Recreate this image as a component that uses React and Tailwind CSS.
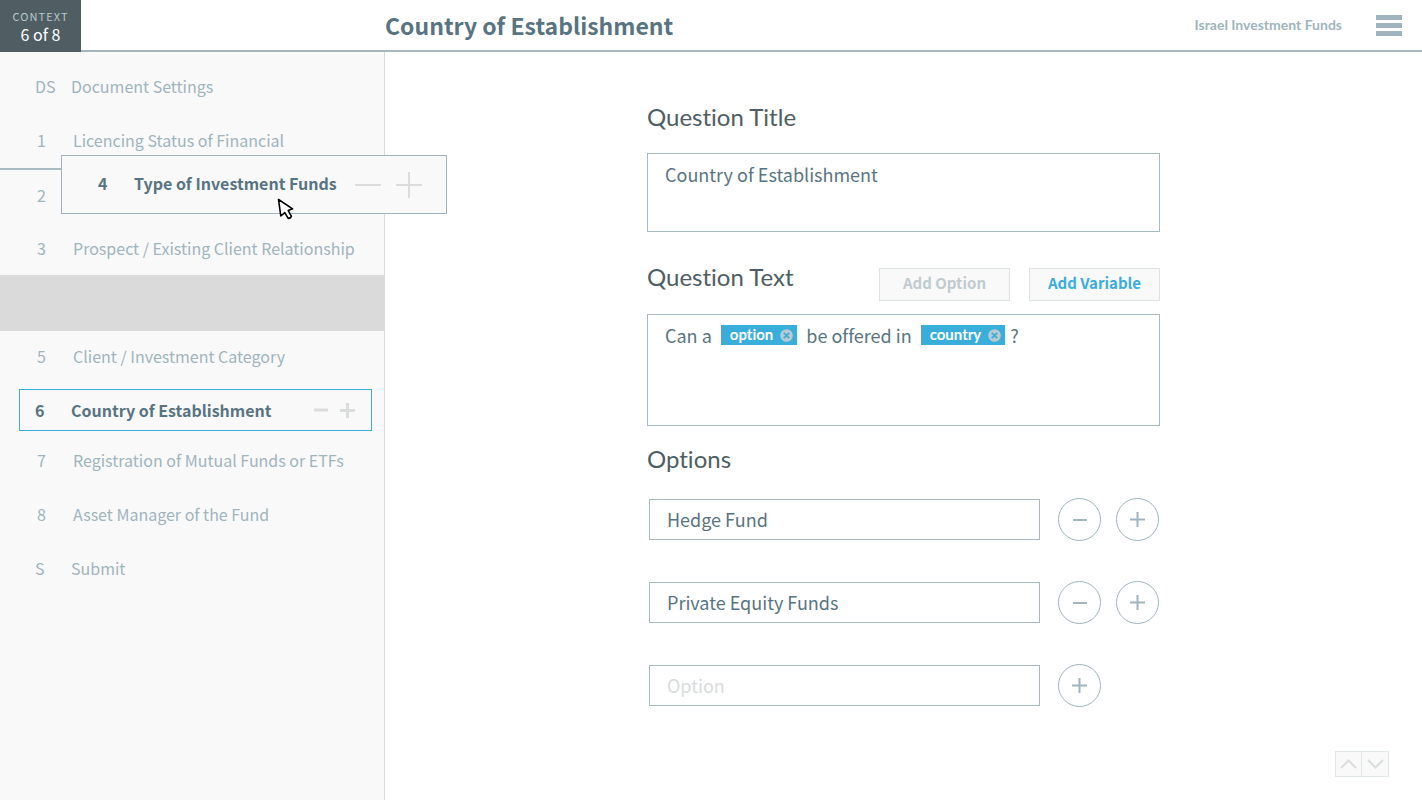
import { useState } from 'react'
import clsx from 'clsx'

const steps = [
  { id: 'DS', label: 'Document Settings', wide: true },
  { id: '1', label: 'Licencing Status of Financial' },
  { id: '2', label: '', dropTarget: true },
  { id: '3', label: 'Prospect / Existing Client Relationship' },
  { id: '4', placeholder: true },
  { id: '5', label: 'Client / Investment Category' },
  { id: '6', label: 'Country of Establishment', active: true },
  { id: '7', label: 'Registration of Mutual Funds or ETFs' },
  { id: '8', label: 'Asset Manager of the Fund' },
  { id: 'S', label: 'Submit', wide: true },
]

const Minus = ({ size, stroke = 2 }) => (
  <svg width={size} height={size} viewBox={`0 0 ${size} ${size}`} fill="none" stroke="currentColor" strokeWidth={stroke}>
    <path d={`M0 ${size / 2}H${size}`} />
  </svg>
)

const Plus = ({ size, stroke = 2 }) => (
  <svg width={size} height={size} viewBox={`0 0 ${size} ${size}`} fill="none" stroke="currentColor" strokeWidth={stroke}>
    <path d={`M0 ${size / 2}H${size}M${size / 2} 0V${size}`} />
  </svg>
)

const Header = () => (
  <header className="flex h-[52px] bg-white">
    <div className="flex w-[81px] shrink-0 flex-col items-center bg-[#505e63] pt-2 text-center">
      <span className="text-[11px] leading-4 tracking-widest text-[#b9c8ce]">CONTEXT</span>
      <span className="text-base leading-5 text-white">6 of 8</span>
    </div>
    <div className="flex flex-1 items-center justify-between border-b-2 border-[#a5b7bd] pr-5 pl-[304px]">
      <h1 className="text-[23px] leading-8 font-bold text-[#587482]">Country of Establishment</h1>
      <div className="flex items-center gap-[34px] text-[#a0b4bd]">
        <span className="font-['Lato',sans-serif] text-sm font-bold">Israel Investment Funds</span>
        <button type="button" aria-label="Menu">
          <svg width="26" height="21" viewBox="0 0 26 21" fill="currentColor">
            <path d="M0 0H26V5H0zM0 8H26V13H0zM0 16H26V21H0z" />
          </svg>
        </button>
      </div>
    </div>
  </header>
)

const Step = ({ step }) => {
  if (step.placeholder) {
    return <li className="-my-px h-[56px] bg-[#dadada]" />
  }

  if (step.active) {
    return (
      <li className="pt-[5px] pr-3 pb-[3px] pl-[19px]">
        <div className="flex h-[42px] items-center border border-[#39aedb] pr-4 pl-[15px] font-bold text-[#587482]">
          <span className="w-9">{step.id}</span>
          <a href="#step-6" className="flex-1" aria-current="step">{step.label}</a>
          <div className="flex gap-3 text-[#dadcdd]">
            <button type="button" aria-label="Remove step"><Minus size={14} stroke={3} /></button>
            <button type="button" aria-label="Add step"><Plus size={15} stroke={3} /></button>
          </div>
        </div>
      </li>
    )
  }

  return (
    <li
      className={clsx(
        'flex h-[54px] items-center pb-[2px] text-[#a0b4bd]',
        step.wide ? 'pl-[35px]' : 'pl-[37px]',
        step.dropTarget && 'border-t-2 border-[#a9bac2]'
      )}
    >
      <span className="w-9">{step.id}</span>
      <a href={`#step-${step.id}`}>{step.label}</a>
    </li>
  )
}

// The step being dragged, floating above the list
const DraggedStep = () => (
  <div className="absolute top-[103px] left-[61px] z-10 flex h-[59px] w-[386px] items-center border border-[#a0b4bd] bg-[#f9f9f9] pr-6 pl-9 text-[#587482]">
    <span className="w-9 pb-1 font-bold">4</span>
    <span className="flex-1 pb-1 font-bold">Type of Investment Funds</span>
    <div className="flex gap-[15px] text-[#dadcdd]">
      <button type="button" aria-label="Remove step"><Minus size={26} stroke={2} /></button>
      <button type="button" aria-label="Add step"><Plus size={26} stroke={2} /></button>
    </div>
    <svg className="absolute top-[42px] left-[215px]" width="18" height="23" viewBox="0 0 18 23" fill="white" stroke="black" strokeWidth="1.6" strokeLinejoin="round">
      <path d="M1.5 1.5L3.8 18L7.8 14.6L11.2 20.4Q13.6 20.4 14.4 18.4L11.2 12.6L15.6 10.8Z" />
    </svg>
  </div>
)

const Sidebar = () => (
  <aside className="relative w-[385px] shrink-0 border-r border-[#d6dadc] bg-[#f9f9f9] pt-2 text-base">
    <ul>
      {steps.map((step) => (
        <Step key={step.id} step={step} />
      ))}
    </ul>
    <DraggedStep />
  </aside>
)

const Chip = ({ children }) => (
  <span className="inline-flex h-5 items-center gap-[7px] bg-[#39aedb] pr-1 pl-[9px] font-['Lato',sans-serif] text-[15px] leading-5 font-bold text-white">
    <span className="pb-[2px]">{children}</span>
    <button type="button" aria-label={`Remove ${children}`}>
      <svg width="13" height="13" viewBox="0 0 13 13" fill="none">
        <circle cx="6.5" cy="6.5" r="6.3" fill="#b9cad1" />
        <path d="M3.8 3.8L9.2 9.2M9.2 3.8L3.8 9.2" stroke="#39aedb" strokeWidth="1.7" />
      </svg>
    </button>
  </span>
)

const RoundButton = ({ label, children }) => (
  <button
    type="button"
    aria-label={label}
    className="flex size-[43px] shrink-0 items-center justify-center rounded-full border border-[#a0b4bd] text-[#a0b4bd]"
  >
    {children}
  </button>
)

const OptionRow = ({ name, value, onChange, removable }) => (
  <div className="flex items-center gap-[15px] pl-[2px]">
    <input
      type="text"
      aria-label={name}
      value={value}
      onChange={(e) => onChange(e.target.value)}
      placeholder="Option"
      className="mr-[3px] h-[41px] w-[391px] border border-[#a9bac2] px-[17px] pb-[2px] text-lg text-[#587482] outline-none placeholder:text-[#d9dcdd]"
    />
    {removable && <RoundButton label="Remove option"><Minus size={14} /></RoundButton>}
    <RoundButton label="Add option"><Plus size={15} /></RoundButton>
  </div>
)

const App = () => {
  const [title, setTitle] = useState('Country of Establishment')
  const [options, setOptions] = useState(['Hedge Fund', 'Private Equity Funds', ''])

  const updateOption = (index, value) => {
    setOptions(options.map((option, i) => (i === index ? value : option)))
  }

  return (
    <div className="flex min-h-screen flex-col bg-white font-['Noto_Sans_CJK_SC',sans-serif] [font-variant-ligatures:none]">
      <Header />
      <div className="flex flex-1">
        <Sidebar />

        <main className="flex flex-1 flex-col pt-[49px]">
          <form className="mx-auto w-[513px]">
            {/* Title */}
            <label htmlFor="title" className="block font-['Lato',sans-serif] text-2xl text-[#4e5d63]">Question Title</label>
            <textarea
              id="title"
              value={title}
              onChange={(e) => setTitle(e.target.value)}
              className="mt-5 block h-[79px] w-full resize-none border border-[#a9bac2] px-[17px] py-1.5 text-lg text-[#587482] outline-none"
            />

            {/* Text */}
            <div className="mt-9 flex h-[33px] items-center gap-[19px]">
              <span id="text-label" className="flex-1 pb-4 font-['Lato',sans-serif] text-2xl text-[#4e5d63]">Question Text</span>
              <button type="button" className="h-[33px] w-[131px] border border-[#dde2e4] bg-[#f9f9f9] pb-[3px] text-[15px] font-bold text-[#c0cbcf]" disabled>
                Add Option
              </button>
              <button type="button" className="h-[33px] w-[131px] border border-[#dde2e4] bg-[#f9f9f9] pb-[3px] text-[15px] font-bold text-[#39aedb]">
                Add Variable
              </button>
            </div>
            <div
              role="textbox"
              tabIndex={0}
              aria-labelledby="text-label"
              className="mt-[13px] flex h-[112px] items-start border border-[#a9bac2] px-[17px] py-1.5 text-lg text-[#587482] outline-none"
            >
              <div className="flex items-center gap-[9px]">
                <span>Can a</span>
                <Chip>option</Chip>
                <span>be offered in</span>
                <div className="flex items-center gap-[5px]">
                  <Chip>country</Chip>
                  <span>?</span>
                </div>
              </div>
            </div>

            {/* Options */}
            <h2 className="mt-[17px] font-['Lato',sans-serif] text-2xl text-[#4e5d63]">Options</h2>
            <div className="mt-[23px] flex flex-col gap-10">
              {options.map((option, i) => (
                <OptionRow
                  key={i}
                  name={`Option ${i + 1}`}
                  value={option}
                  onChange={(value) => updateOption(i, value)}
                  removable={i < options.length - 1}
                />
              ))}
            </div>
          </form>

          <div className="mt-auto flex justify-end pr-[33px] pb-[23px] text-[#dadcdd]">
            <button type="button" aria-label="Previous" className="flex h-[26px] w-[27px] items-center justify-center border border-[#e0e5e8] bg-[#f9f9f9]">
              <svg width="17" height="10" viewBox="0 0 17 10" fill="none" stroke="currentColor" strokeWidth="2">
                <path d="M1 9L8.5 1.5L16 9" />
              </svg>
            </button>
            <button type="button" aria-label="Next" className="flex h-[26px] w-[27px] items-center justify-center border border-l-0 border-[#e0e5e8] bg-[#f9f9f9]">
              <svg width="17" height="10" viewBox="0 0 17 10" fill="none" stroke="currentColor" strokeWidth="2">
                <path d="M1 1L8.5 8.5L16 1" />
              </svg>
            </button>
          </div>
        </main>
      </div>
    </div>
  )
}

export default App
